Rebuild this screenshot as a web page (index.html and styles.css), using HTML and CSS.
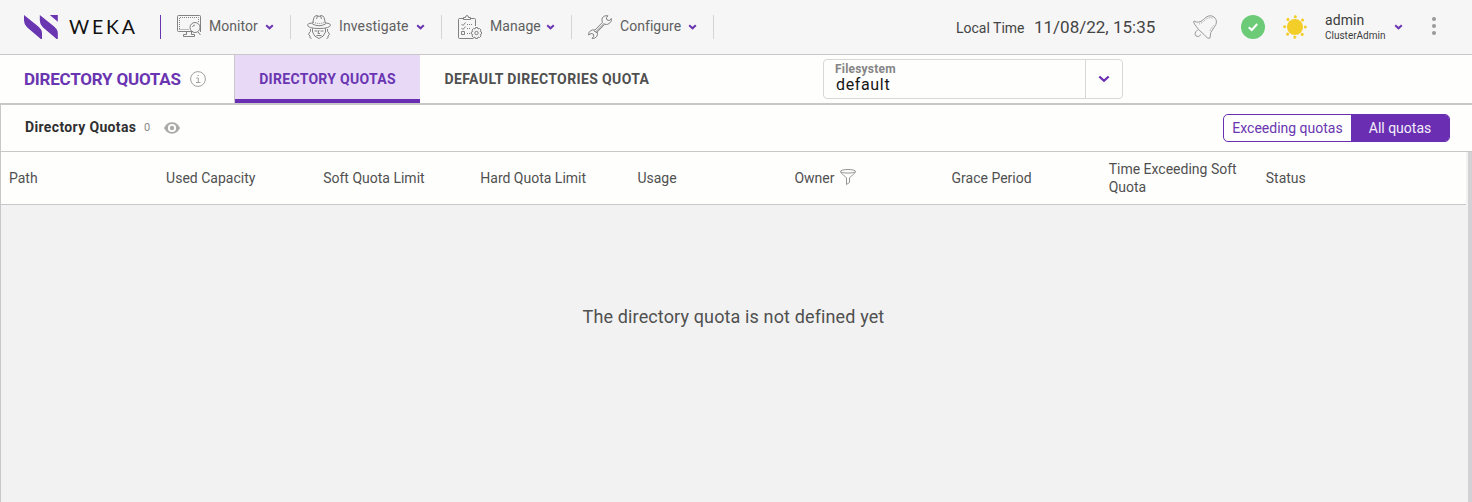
FILE: index.html
```html
<!DOCTYPE html>
<html lang="en">
<head>
<meta charset="utf-8">
<title>Directory Quotas</title>
<link rel="stylesheet" href="styles.css">
</head>
<body>
<header class="topbar">
  <svg class="logo" width="34" height="24" viewBox="0 0 34 24"><path d="M0 0L14 11.200Q18 14.500 18 18V24H16.800L3 12.300Q0 9.500 0 5.500ZM15.800 0L29.800 11.200Q33.800 14.500 33.800 18V24H32.600L18.800 12.300Q15.800 9.500 15.800 5.500ZM25.800 0H33.800V6.800Z" fill="#6a35b1"/></svg>
  <span class="wordmark">WEKA</span>
  <nav class="nav">
    <a class="nav-item monitor">
      <svg class="nav-icon" viewBox="0 0 24 24"><path d="M16 16.5H1.5Q.5 16.5.5 15.5V1.5Q.5.5 1.5.5H22.5Q23.5.5 23.5 1.5V17M9.5 16.5V19.5H6.5V21.5H17.5V19.5H14.5V17"/><path stroke-dasharray="1 1" d="M2.5 14V2.5H21.5V7M2.5 14.5H12"/><circle cx="18" cy="12.500" r="5"/><path d="M15.500 12Q16 10 18 10M21 17L23.500 20"/></svg>
      <span class="nav-label">Monitor</span>
      <svg class="chevron" viewBox="0 0 9 6"><path d="M1.200 1.200L4.500 4.300L7.800 1.200"/></svg>
    </a>
    <a class="nav-item investigate">
      <svg class="nav-icon" viewBox="0 0 24 24"><path d="M5.500 8.500L7 2.500Q7.800.5 10 .5L12 1.500L14 .5Q16.200.5 17 2.500L18.500 8.500M5.500 8Q.5 8 .5 10Q1 13.500 12 13.500T23.500 10Q23.500 8 18.500 8M5.500 9Q12 12.500 18.500 9M9.500 4L10.500 1M14.500 4L13.500 1"/><path stroke-dasharray="1 1" d="M6 7Q12 10 18 7"/><path d="M5.500 13.500V17Q7 22 12 23.500Q17 22 18.500 17V13.500M7.500 16H10.500M13.500 16H16.500M12 15L11 18.500H13M9.500 20.500H14.500M3.500 14Q4 17 2 18Q1 20 3 21Q2 23 4.500 23.500M20.500 14Q20 17 22 18Q23 20 21 21Q22 23 19.500 23.500"/></svg>
      <span class="nav-label">Investigate</span>
      <svg class="chevron" viewBox="0 0 9 6"><path d="M1.200 1.200L4.500 4.300L7.800 1.200"/></svg>
    </a>
    <a class="nav-item manage">
      <svg class="nav-icon" viewBox="0 0 24 24"><path d="M5.500 3.500H1.500Q.5 3.500.5 4.500V22.500Q.5 23.500 1.500 23.500H15.500M12.500 3.500H16.500Q17.500 3.500 17.500 4.500V11M5.500 4.500V2.500H7.500Q7.500.5 9 .5T10.500 2.500H12.500V4.500ZM3.500 9L5 10.500L7.500 7.500M3.500 13L5 14.500L7.500 11.500M3.500 16.500H6.500V19.500H3.500Z"/><path stroke-dasharray="1 1" d="M9 9.500H15M9 13.500H13M9 18.500H12"/><circle cx="18.500" cy="18" r="1.700"/><path d="M17.500 12.500H19.500L20 14L21.500 13.500L23 15L22.300 16.500L23.500 17V19L22.300 19.500L23 21L21.500 22.500L20 22L19.500 23.500H17.500L17 22L15.500 22.500L14 21L14.700 19.500L13.300 19V17L14.700 16.500L14 15L15.500 13.500L17 14Z"/></svg>
      <span class="nav-label">Manage</span>
      <svg class="chevron" viewBox="0 0 9 6"><path d="M1.200 1.200L4.500 4.300L7.800 1.200"/></svg>
    </a>
    <a class="nav-item configure">
      <svg class="nav-icon" viewBox="0 0 24 24"><path d="M20 .8Q16.500 0 14.500 2.500Q13.200 5 14.500 7.300L7 15Q4.500 14.300 2.500 15.800Q.2 17.500.6 20L3 18.500L5.300 19L5.800 21.200L4 23.500Q7 23.800 8.700 21.500Q10 19.500 9.200 17L16.800 9.300Q19.500 10 21.500 8.300Q24 6.500 23.300 3.500L21.500 5.500L19 5L18.300 2.800Z"/><path d="M7.500 17L16.500 8M5.800 15.800L9 17.800"/></svg>
      <span class="nav-label">Configure</span>
      <svg class="chevron" viewBox="0 0 9 6"><path d="M1.200 1.200L4.500 4.300L7.800 1.200"/></svg>
    </a>
  </nav>
  <div class="clock"><span class="clock-label">Local Time</span><span class="clock-value">11/08/22, 15:35</span></div>
  <svg class="bell" width="24" height="24" viewBox="0 0 24 24"><path d="M1 6Q5.500 9 10.500 4.500Q16-1.500 21 2Q26 6.500 21 12.500Q16.500 17.500 17 23Q15 24.500 11 19.500Q5 15 1.500 9Q0 6.500 1 6ZM3 16.500Q.8 19 3 21Q5.500 23 8 19.500M3 16.500L5 14.500"/><path stroke-dasharray="1 1" d="M6 9Q9 8 11 6Q16 1 20 3.500M17 16Q18 13 20.500 10.500"/></svg>
  <svg class="status" width="24" height="24" viewBox="0 0 24 24"><circle cx="12" cy="12" r="12" fill="#6bcb77"/><path d="M7.700 12.300L10.800 15L16.200 9" fill="none" stroke="#fff" stroke-width="2"/></svg>
  <svg class="sun" width="24" height="24" viewBox="0 0 24 24"><circle cx="12" cy="12" r="8"/><circle cx="12" cy="12" r="10.300" class="rays"/></svg>
  <div class="user"><span class="user-name">admin</span><span class="user-role">ClusterAdmin</span></div>
  <svg class="chevron user-chevron" viewBox="0 0 9 6"><path d="M1.200 1.200L4.500 4.300L7.800 1.200"/></svg>
  <svg class="more" width="4" height="18" viewBox="0 0 4 18"><circle cx="2" cy="2" r="2"/><circle cx="2" cy="9" r="2"/><circle cx="2" cy="16" r="2"/></svg>
</header>
<div class="tabbar">
  <div class="page-title"><span class="title-text">DIRECTORY QUOTAS</span>
    <svg class="info" width="16" height="16" viewBox="0 0 16 16"><circle cx="8" cy="8" r="7.400"/><path d="M6.300 7H8.300V11.500M6 11.500H10.500M7.500 4.500H8.700"/></svg>
  </div>
  <a class="tab tab-active"><span>DIRECTORY QUOTAS</span></a>
  <a class="tab tab-default"><span>DEFAULT DIRECTORIES QUOTA</span></a>
  <div class="select">
    <div class="select-body"><span class="select-label">Filesystem</span><span class="select-value">default</span></div>
    <div class="select-arrow"><svg width="12" height="8" viewBox="0 0 12 8"><path d="M1.300 1.500L6 5.800L10.700 1.500"/></svg></div>
  </div>
</div>
<main class="panel">
  <div class="panel-head">
    <span class="panel-title">Directory Quotas</span><span class="count">0</span>
    <svg class="eye" width="16" height="12" viewBox="0 0 16 12"><path fill-rule="evenodd" d="M0 6Q2.500.3 8 .3T16 6Q13.500 11.700 8 11.700T0 6ZM8 1.900A4.100 4.100 0 1 0 8 10.100A4.100 4.100 0 1 0 8 1.900Z"/><circle cx="8" cy="6" r="2.200"/></svg>
    <div class="toggle"><span class="toggle-off">Exceeding quotas</span><span class="toggle-on">All quotas</span></div>
  </div>
  <div class="table-wrap">
    <div class="table">
      <div class="thead">
        <span class="c-path">Path</span><span class="c-used">Used Capacity</span><span class="c-soft">Soft Quota Limit</span><span class="c-hard">Hard Quota Limit</span><span class="c-usage">Usage</span>
        <span class="c-owner">Owner<svg class="funnel" width="16" height="16" viewBox="0 0 16 16"><ellipse cx="8" cy="2.300" rx="7.500" ry="1.800"/><path d="M.5 2.500Q1 4.500 3.500 6L6.500 9V15.500L9.500 13.500V9L12.500 6Q15 4.500 15.500 2.500"/></svg></span>
        <span class="c-grace">Grace Period</span><span class="c-time">Time Exceeding Soft<br>Quota</span><span class="c-status">Status</span>
      </div>
      <div class="empty">The directory quota is not defined yet</div>
    </div>
  </div>
</main>
</body>
</html>
```
FILE: styles.css
```css
* { box-sizing: border-box; }
body { margin: 0; height: 502px; overflow: hidden; display: flex; flex-direction: column; background: #f2f2f2; color: #505050; font: 14px/18px Roboto, "Open Sans", sans-serif; }
svg { display: block; flex: none; }
span { white-space: nowrap; }
.topbar { flex: none; height: 55px; display: flex; align-items: center; background: #f6f6f6; border-bottom: 1px solid #c8c8ca; }
.logo { margin-left: 24px; }
.wordmark { width: 91px; margin-left: 11px; color: #111; font: 19.500px/26px Lato, sans-serif; letter-spacing: 2.800px; }
.nav { display: flex; align-items: center; height: 24px; border-left: 1px solid #6a35b1; }
.nav-item { display: flex; align-items: center; height: 24px; padding: 0 16px; border-right: 1px solid #d5d5d5; }
.nav-icon { width: 24px; height: 24px; margin-right: 8px; fill: none; stroke: #757575; stroke-width: .9; }
.nav-label { width: 48px; padding-bottom: 2px; color: #606060; letter-spacing: .05px; }
.investigate .nav-label { width: 69px; letter-spacing: .12px; }
.configure .nav-label { width: 60px; }
.chevron { width: 9px; height: 6px; margin-left: 8px; fill: none; stroke: #6a35b1; stroke-width: 2; }
.clock { display: flex; align-items: center; width: 237px; margin-left: 242px; color: #444; }
.clock-label { width: 78px; padding-top: 2px; }
.clock-value { font-size: 17px; }
.bell { fill: none; stroke: #9a9a9a; }
.status { margin-left: 24px; }
.sun { margin-left: 18px; fill: #f3cd28; }
.rays { fill: none; stroke: #f3cd28; stroke-width: 3; stroke-linecap: round; stroke-dasharray: .1 7.990; }
.user { display: flex; flex-direction: column; width: 61px; margin-left: 18px; color: #3d3d3d; }
.user-name { font-size: 14px; line-height: 16px; letter-spacing: .1px; }
.user-role { padding-top: 1px; font-size: 10px; line-height: 14px; }
.more { margin: 0 0 2px 29px; fill: #999; }
.tabbar { flex: none; height: 50px; display: flex; background: #fefefd; border-bottom: 2px solid #c8c8ca; font-weight: 700; }
.page-title { display: flex; align-items: center; width: 235px; padding-left: 24px; border-right: 1px solid #c8c8ca; color: #6a35b1; font-size: 17px; }
.title-text { width: 166px; letter-spacing: -.22px; }
.info { fill: none; stroke: #a0a0a0; }
.tab { display: flex; align-items: center; justify-content: center; }
.tab-active { width: 185px; background: #e8daf7; border-bottom: 4px solid #6a2eb3; padding-top: 4px; color: #6a35b1; letter-spacing: .29px; }
.tab-default { width: 254px; letter-spacing: .38px; }
.select { display: flex; width: 300px; height: 40px; margin: 4px 0 0 149px; border: 1px solid #d8d8db; border-radius: 4px; font-weight: 400; }
.select-body { flex: 1; display: flex; flex-direction: column; padding-left: 11px; }
.select-label { padding-top: 2px; color: #858585; font-size: 12px; line-height: 15px; font-weight: 700; letter-spacing: .2px; }
.select-value { padding-left: 1px; color: #151515; font-size: 16px; line-height: 16px; letter-spacing: .65px; }
.select-arrow { display: flex; align-items: center; justify-content: center; width: 37px; border-left: 1px solid #d8d8db; }
.select-arrow svg { fill: none; stroke: #6a2eb3; stroke-width: 2.300; }
.panel { flex: 1; display: flex; flex-direction: column; border-left: 1px solid #c8c8ca; }
.panel-head { flex: none; display: flex; align-items: center; height: 47px; padding: 0 22px 0 24px; background: #fefefd; border-bottom: 1px solid #c8c8ca; }
.panel-title { width: 119px; padding-bottom: 2px; color: #303030; font-weight: 700; letter-spacing: .35px; }
.count { width: 20px; color: #888; font-size: 11px; }
.eye { fill: #aaa; }
.toggle { display: flex; width: 227px; height: 28px; margin-left: auto; border: 1px solid #6a2eb3; border-radius: 5px; overflow: hidden; line-height: 26px; text-align: center; }
.toggle-off { width: 127px; color: #6a35b1; }
.toggle-on { flex: 1; background: #6a2eb3; color: #f4eefa; }
.table-wrap { flex: 1; display: flex; border-right: 4px solid #d2d2d4; }
.table { flex: 1; }
.thead { display: grid; grid-template-columns: repeat(9, 157.100px); align-items: center; height: 53px; width: 1465px; padding-left: 8px; background: #fefefd; border-bottom: 1px solid #c8c8ca; }
.c-owner { display: flex; gap: 5px; }
.funnel { fill: none; stroke: #8a8a8a; stroke-width: .9; }
.empty { padding: 102px 2px 0 0; text-align: center; font-size: 18px; line-height: 20px; letter-spacing: .13px; }
```
